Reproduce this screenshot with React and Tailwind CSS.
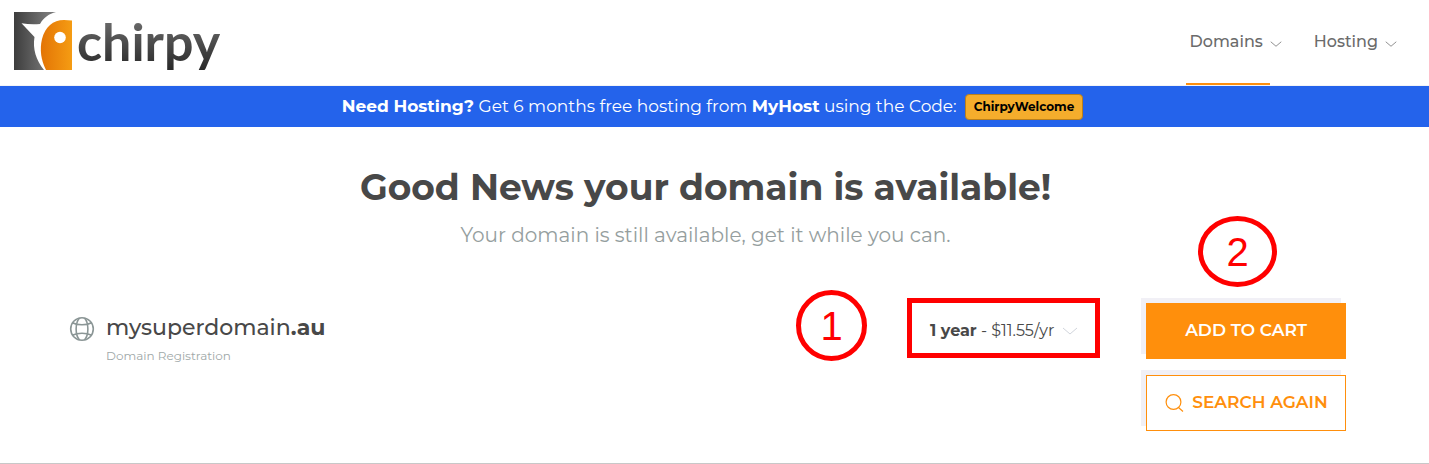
import React, { useState } from 'react';

const terms = [
  { id: '1', label: '1 year', price: '$11.55/yr' },
  { id: '2', label: '2 years', price: '$11.55/yr' },
  { id: '5', label: '5 years', price: '$11.55/yr' }
];

const Chevron = ({ className }) => (
  <svg viewBox="0 0 16 8" fill="none" stroke="currentColor" className={className} aria-hidden="true">
    <path d="M1 1l7 6 7-6" />
  </svg>
);

const LogoMark = () => (
  <svg viewBox="0 0 58 58" className="w-[58px] h-[58px] shrink-0" aria-hidden="true">
    <defs>
      <linearGradient id="body" x1="0" x2="1" y1="0" y2="0">
        <stop offset="0" stopColor="#3d3d3d" />
        <stop offset="0.8" stopColor="#777777" />
      </linearGradient>
      <linearGradient id="face" x1="0" x2="1" y1="0" y2="0">
        <stop offset="0" stopColor="#e37405" />
        <stop offset="1" stopColor="#f59c13" />
      </linearGradient>
    </defs>
    <path
      d="M0 0H42C35 2 30 5 26 12Q17 13 7.5 11.2L20.5 25C18.5 37 22 48 30 58H0Z"
      fill="url(#body)"
    />
    <path
      d="M58 8.5V58H32C27 48 25.5 38 28 27C31 15 39 8 50 8Z"
      fill="url(#face)"
    />
    <circle cx="46" cy="25.5" r="5.8" fill="#ffffff" />
  </svg>
);

const GlobeIcon = () => (
  <svg viewBox="0 0 26 26" fill="none" stroke="currentColor" strokeWidth="1.6" className="w-[26px] h-[26px] shrink-0 text-[#8b9696]" aria-hidden="true">
    <circle cx="13" cy="13" r="11.3" />
    <path d="M10.5 2C6 7 6 19 10.5 24M15.5 2c4.5 5 4.5 17 0 22" />
    <path d="M4 7c4.5 2.4 13.5 2.4 18 0M4 19c4.5-2.4 13.5-2.4 18 0" />
  </svg>
);

const SearchIcon = () => (
  <svg viewBox="0 0 20 20" fill="none" stroke="currentColor" strokeWidth="1.2" className="w-5 h-5 shrink-0" aria-hidden="true">
    <circle cx="9.5" cy="9" r="7.4" />
    <path d="M14.5 14.5l4.5 4" />
  </svg>
);

const App = () => {
  const [term, setTerm] = useState('1');
  const selected = terms.find((item) => item.id === term);

  return (
    <div className="bg-white text-[#484848] font-[Montserrat,Inter,sans-serif]">
      {/* Header */}
      <header className="flex items-stretch justify-between h-[86px] pl-3.5 pr-8 border-b border-gray-100">
        <a href="#home" className="flex items-start gap-[5px] pt-3">
          <LogoMark />
          <span className="font-[Lato,sans-serif] font-bold text-[52px] leading-[58px] h-16 bg-gradient-to-b from-[#777777] to-[#222222] bg-clip-text text-transparent">
            chirpy
          </span>
        </a>
        <nav className="flex gap-8 text-base font-medium text-[#6b6b6b]">
          <a href="#domains" className="flex items-center gap-[7px] pb-0.5 relative">
            <span>Domains</span>
            <Chevron className="w-3 h-1.5 mt-1" />
            <span className="absolute -left-1 right-3 bottom-0 h-0.5 bg-[#ff8f0c]" />
          </a>
          <a href="#hosting" className="flex items-center gap-[7px] pb-0.5">
            <span>Hosting</span>
            <Chevron className="w-3 h-1.5 mt-1" />
          </a>
        </nav>
      </header>

      {/* Promo banner */}
      <div className="flex items-center justify-center h-[41px] pr-1 bg-[#2463eb] text-white text-[17px]">
        <p>
          <strong className="font-bold">Need Hosting?</strong> Get 6 months free hosting from{' '}
          <strong className="font-bold">MyHost</strong> using the Code:
        </p>
        <button className="ml-2 h-[26px] px-2 rounded bg-[#f5ad2c] border border-[#b97f1c] text-black text-xs font-bold">
          ChirpyWelcome
        </button>
      </div>

      <main className="pl-[65px] pr-[83px] pb-8 border-b border-[#c8c8c8]">
        {/* Result message */}
        <div className="pt-9 text-center">
          <h1 className="text-4xl leading-12 font-bold">Good News your domain is available!</h1>
          <p className="mt-2 text-xl leading-8 text-[#959e9e]">
            Your domain is still available, get it while you can.
          </p>
        </div>

        {/* Domain row */}
        <div className="flex items-start mt-[52px]">
          <div className="flex-1 flex items-start gap-[11px] pl-1 pt-[13px]">
            <GlobeIcon />
            <div className="-mt-0.5">
              <h2 className="text-[22px] leading-7 font-medium">
                mysuperdomain<span className="font-bold">.au</span>
              </h2>
              <p className="mt-1 text-xs leading-5 text-[#a0a8a8]">Domain Registration</p>
            </div>
          </div>

          <div className="-mt-[13px] mr-10 w-[71px] h-[71px] border-5 border-[#ff0000] rounded-full flex items-center justify-center text-[#ff0000] text-[40px] leading-none font-['Liberation_Sans',Arial,sans-serif]">
            1
          </div>

          <label className="relative -mt-[5px] mr-[46px] w-[193px] h-[60px] border-5 border-[#ff0000] flex items-center gap-2 pl-[18px] pt-1.5 text-base">
            <span className="whitespace-nowrap">
              <b className="font-bold">{selected.label}</b> - {selected.price}
            </span>
            <Chevron className="w-4 h-2 text-gray-300" />
            <select
              aria-label="Registration period"
              value={term}
              onChange={(e) => setTerm(e.target.value)}
              className="absolute inset-0 w-full h-full opacity-0 cursor-pointer"
            >
              {terms.map((item) => (
                <option key={item.id} value={item.id}>
                  {item.label} - {item.price}
                </option>
              ))}
            </select>
          </label>

          <div className="relative w-[200px] flex flex-col gap-4">
            <div className="absolute left-[52px] -top-[87px] w-[79px] h-[71px] border-5 border-[#ff0000] rounded-[50%] flex items-center justify-center text-[#ff0000] text-[40px] leading-none font-['Liberation_Sans',Arial,sans-serif]">
              2
            </div>
            <button className="h-14 bg-[#ff8f0c] text-white text-[17px] font-semibold shadow-[-5px_-5px_0_#f1f0f6]">
              ADD TO CART
            </button>
            <button className="h-14 flex items-center justify-center gap-2 bg-white border border-[#ff8f0c] text-[#ff8f0c] text-[17px] font-semibold shadow-[-5px_-5px_0_#f1f0f6]">
              <SearchIcon />
              SEARCH AGAIN
            </button>
          </div>
        </div>
      </main>
    </div>
  );
};

export default App;
